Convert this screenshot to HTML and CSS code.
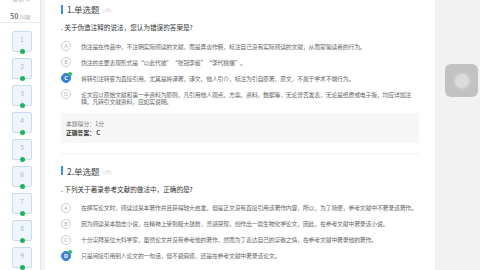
FILE: index.html
```html
<!DOCTYPE html>
<html lang="zh">
<head>
<meta charset="utf-8">
<title>答题卡</title>
<link rel="stylesheet" href="styles.css">
</head>
<body>
<div class="app">
  <aside class="sidebar">
    <div class="side-head">
      <div class="side-cut">答题卡</div>
      <div class="side-count"><b>50</b><span>/50题</span></div>
    </div>
    <ul class="nums">
      <li class="num">1<i class="dot"></i></li>
      <li class="num">2<i class="dot"></i></li>
      <li class="num">3<i class="dot"></i></li>
      <li class="num">4<i class="dot"></i></li>
      <li class="num">5<i class="dot"></i></li>
      <li class="num">6<i class="dot"></i></li>
      <li class="num">7<i class="dot"></i></li>
      <li class="num">8<i class="dot"></i></li>
      <li class="num">9<i class="dot"></i></li>
    </ul>
  </aside>
  <main class="main">
    <section class="question first">
      <div class="qhead"><span class="bar"></span><span class="qtitle">1.单选题</span><span class="qscore">(1分)</span></div>
      <div class="qtext">. 关于伪造注释的说法，您认为错误的答案是?</div>
      <ul class="options">
        <li class="opt"><span class="circle">A</span><span class="otext">伪注是在作品中，不注明实际阅读的文献，而是弄虚作假，标注自己没有实际阅读的文献，从而蒙骗读者的行为。</span></li>
        <li class="opt"><span class="circle">B</span><span class="otext">伪注的主要表现形式是“以此代彼”“张冠李戴”“李代桃僵”。</span></li>
        <li class="opt"><span class="circle sel">C<i class="cdot"></i></span><span class="otext">将转引注转变为直接引用，尤其是将译著、译文、他人引介，标注为引自原著、原文，不属于学术不端行为。</span></li>
        <li class="opt"><span class="circle">D</span><span class="otext">论文应以原始文献和第一手资料为原则，凡引用他人观点、方案、资料、数据等，无论曾否发表，无论是纸质或电子版，均应详加注释。凡转引文献资料，应如实说明。</span></li>
      </ul>
      <div class="result">
        <div>本题得分：1分</div>
        <div class="answer">正确答案： C</div>
      </div>
    </section>
    <section class="question">
      <div class="qhead"><span class="bar"></span><span class="qtitle">2.单选题</span><span class="qscore">(1分)</span></div>
      <div class="qtext">. 下列关于著录参考文献的做法中，正确的是?</div>
      <ul class="options">
        <li class="opt"><span class="circle">A</span><span class="otext">在撰写论文时，阅读过某本著作并且获得较大启发，但是正文没有直接引用该著作内容，所以，为了简便，参考文献中不著录该著作。</span></li>
        <li class="opt"><span class="circle">B</span><span class="otext">因为阅读某本励志小说，在精神上受到极大鼓舞，灵感突现，创作出一篇生物化学论文，因此，在参考文献中著录该小说。</span></li>
        <li class="opt"><span class="circle">C</span><span class="otext">十分崇拜某位大科学家，虽然论文并没有参考他的著作，然而为了表达自己的崇敬之情，在参考文献中著录他的著作。</span></li>
        <li class="opt"><span class="circle sel">D<i class="cdot"></i></span><span class="otext">只是间接引用别人论文的一句话，但不避麻烦，还是在参考文献中著录该论文。</span></li>
      </ul>
    </section>
  </main>
  <div class="rail">
    <div class="fab"><span class="fab-in"></span></div>
  </div>
</div>
</body>
</html>
```

FILE: styles.css
```css
* { box-sizing: border-box; }
html, body {
  margin: 0;
  padding: 0;
}
body {
  width: 480px;
  height: 270px;
  overflow: hidden;
  background: #f2f2f2;
  font-family: "Noto Sans CJK SC", "Noto Sans", sans-serif;
  color: #333;
}
ul { list-style: none; margin: 0; padding: 0; }

.app {
  display: flex;
  height: 270px;
}

/* sidebar */
.sidebar {
  width: 41px;
  flex: none;
  background: #fff;
  border-right: 1px solid #e6e6e6;
}
.side-head {
  height: 23px;
  border-bottom: 1px solid #ececec;
  overflow: hidden;
}
.side-cut {
  margin-top: -6px;
  height: 9px;
  line-height: 9px;
  font-size: 6px;
  color: #bbb;
  padding-left: 12px;
}
.side-count {
  margin-top: 5px;
  padding-left: 10px;
  line-height: 8px;
  color: #888;
}
.side-count b {
  font-size: 7px;
  font-weight: 700;
  color: #777;
}
.side-count span {
  font-size: 4.5px;
  color: #aaa;
  margin-left: 1px;
}
.nums {
  padding: 8px 0 0 12px;
}
.num {
  position: relative;
  width: 20px;
  height: 21px;
  margin-bottom: 6px;
  border: 1px solid #c8dbf3;
  background: #eef5fd;
  border-radius: 2px;
  color: #9db8dd;
  font-size: 6.5px;
  text-align: center;
  line-height: 15px;
}
.dot {
  position: absolute;
  left: 7px;
  bottom: -3px;
  width: 5px;
  height: 5px;
  border-radius: 50%;
  background: #1fb35a;
}

/* main */
.main {
  width: 390px;
  flex: none;
  margin-left: 4px;
  background: #fff;
  padding: 0 16px;
}
.question {
  padding: 11px 0 10px;
  border-bottom: 1px solid #f3f3f3;
}
.question.first {
  margin-top: -8px;
}
.qhead {
  display: flex;
  align-items: center;
  height: 12px;
}
.bar {
  width: 2px;
  height: 9px;
  background: #3b8ee8;
  margin-right: 4px;
}
.qtitle {
  font-size: 8.5px;
  color: #444;
  line-height: 12px;
}
.qscore {
  font-size: 4px;
  color: #c4c4c4;
  margin-left: 3px;
  padding-top: 2px;
}
.qtext {
  margin-top: 8px;
  font-size: 6.6px;
  line-height: 8px;
  color: #333;
}
.options {
  margin-top: 10px;
}
.opt {
  display: flex;
  align-items: flex-start;
  margin-bottom: 6px;
}
.opt:last-child { margin-bottom: 0; }
.circle {
  position: relative;
  flex: none;
  width: 10px;
  height: 10px;
  border-radius: 50%;
  border: 1px solid #cfcfcf;
  color: #b0b0b0;
  font-size: 5.5px;
  line-height: 8px;
  text-align: center;
  font-family: "Noto Sans", sans-serif;
}
.circle.sel {
  background: #3a7fdc;
  border-color: #3a7fdc;
  color: #fff;
  font-weight: 700;
}
.cdot {
  position: absolute;
  right: -2px;
  top: -2px;
  width: 4px;
  height: 4px;
  border-radius: 50%;
  background: #26c15f;
}
.otext {
  flex: none;
  margin-left: 10px;
  width: 338px;
  padding-top: 1.5px;
  font-size: 5.9px;
  letter-spacing: -0.2px;
  line-height: 7px;
  color: #666;
}
.result {
  margin-top: 8px;
  background: #f7f7f7;
  padding: 6px 5px;
  font-size: 5.8px;
  line-height: 9px;
  color: #777;
}
.answer {
  font-weight: 700;
  color: #333;
}

/* right rail */
.rail {
  flex: 1;
  position: relative;
}
.fab {
  position: absolute;
  left: 10px;
  top: 64px;
  width: 33px;
  height: 33px;
  border-radius: 6px;
  background: #c2c2c2;
  display: flex;
  align-items: center;
  justify-content: center;
}
.fab-in {
  width: 14px;
  height: 14px;
  border-radius: 50%;
  background: #dcdcdc;
  box-shadow: 0 0 3px 1px #d4d4d4;
}
```
